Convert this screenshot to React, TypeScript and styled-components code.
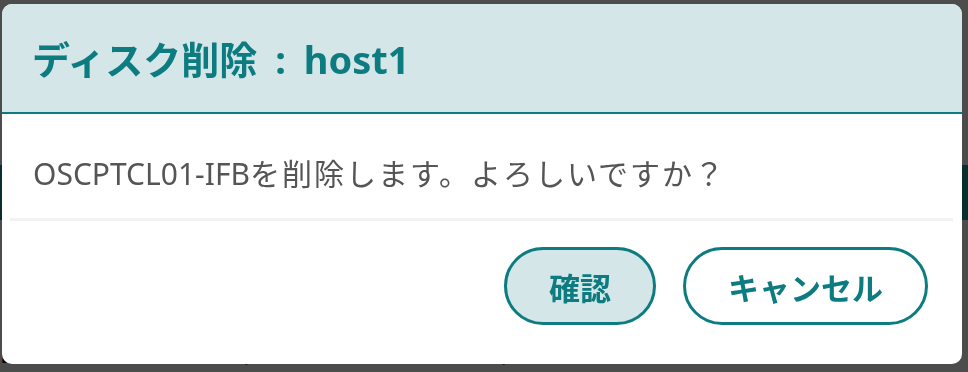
import styled, { createGlobalStyle } from 'styled-components';

const GlobalStyle = createGlobalStyle`
  html, body {
    margin: 0;
    padding: 0;
    background: #ffffff;
    font-family: "Noto Sans", "Noto Sans CJK JP", sans-serif;
  }
  * {
    box-sizing: border-box;
  }
`;

const TEAL = '#0c7c80';
const TEAL_LIGHT = '#d4e6e8';

export default function App() {
  return (
    <>
      <GlobalStyle />
      <Page>
        <PageBand />
        <PageRow>
          <PageLabel>Version</PageLabel>
          <PageValue>（ＣＨＯＪＡＴＲＯＮ）ＲＯＭ</PageValue>
        </PageRow>
      </Page>
      <Overlay>
        <Dialog role="dialog" aria-labelledby="dialog-title">
          <Header>
            <Title id="dialog-title">ディスク削除 : host1</Title>
          </Header>
          <Body>
            <Message>
              OSCPTCL01-IFB<Kana>を削除します。よろしいですか？</Kana>
            </Message>
          </Body>
          <Divider />
          <Footer>
            <ActionButton $primary>確認</ActionButton>
            <ActionButton>キャンセル</ActionButton>
          </Footer>
        </Dialog>
      </Overlay>
    </>
  );
}

const Page = styled.div`
  height: 372px;
  display: flex;
  flex-direction: column;
  padding-top: 165px;
  overflow: hidden;
`;

const PageBand = styled.div`
  height: 75px;
  background: #1f9a9e;
`;

const PageRow = styled.div`
  display: flex;
  gap: 150px;
  margin-top: 112px;
  margin-left: -34px;
  font-weight: 700;
  font-size: 28px;
  line-height: 40px;
  color: #0a1a2a;
`;

const PageLabel = styled.span``;

const PageValue = styled.span`
  font-weight: 400;
`;

const Overlay = styled.div`
  position: fixed;
  inset: 0;
  background: rgba(0, 0, 0, 0.7);
  padding: 4px 6px 8px 2px;
  display: flex;
  align-items: flex-start;
`;

const Dialog = styled.div`
  width: 960px;
  height: 360px;
  background: #ffffff;
  border-radius: 10px;
  overflow: hidden;
  display: flex;
  flex-direction: column;
`;

const Header = styled.div`
  height: 110px;
  flex-shrink: 0;
  background: ${TEAL_LIGHT};
  border-bottom: 2px solid ${TEAL};
  display: flex;
  align-items: center;
  padding: 0 0 2px 30px;
`;

const Title = styled.h1`
  margin: 0;
  font-size: 38px;
  font-weight: 700;
  color: ${TEAL};
  word-spacing: 8px;
`;

const Body = styled.div`
  padding: 40px 31px 24px;
`;

const Message = styled.p`
  margin: 0;
  font-size: 30px;
  line-height: 40px;
  color: #555555;
`;

const Kana = styled.span`
  letter-spacing: 2px;
`;

const Divider = styled.div`
  height: 3px;
  margin: 0 9px 0 8px;
  background: #f2f2f2;
`;

const Footer = styled.div`
  display: flex;
  justify-content: flex-end;
  gap: 27px;
  padding: 26px 34px 0 0;
`;

const ActionButton = styled.button<{ $primary?: boolean }>`
  height: 78px;
  padding: 0 42px;
  border-radius: 39px;
  border: 3px solid ${TEAL};
  background: ${(p) => (p.$primary ? TEAL_LIGHT : '#ffffff')};
  color: ${TEAL};
  font-family: "Noto Sans", "Noto Sans CJK JP", sans-serif;
  font-size: 31px;
  font-weight: 700;
  cursor: pointer;
`;
